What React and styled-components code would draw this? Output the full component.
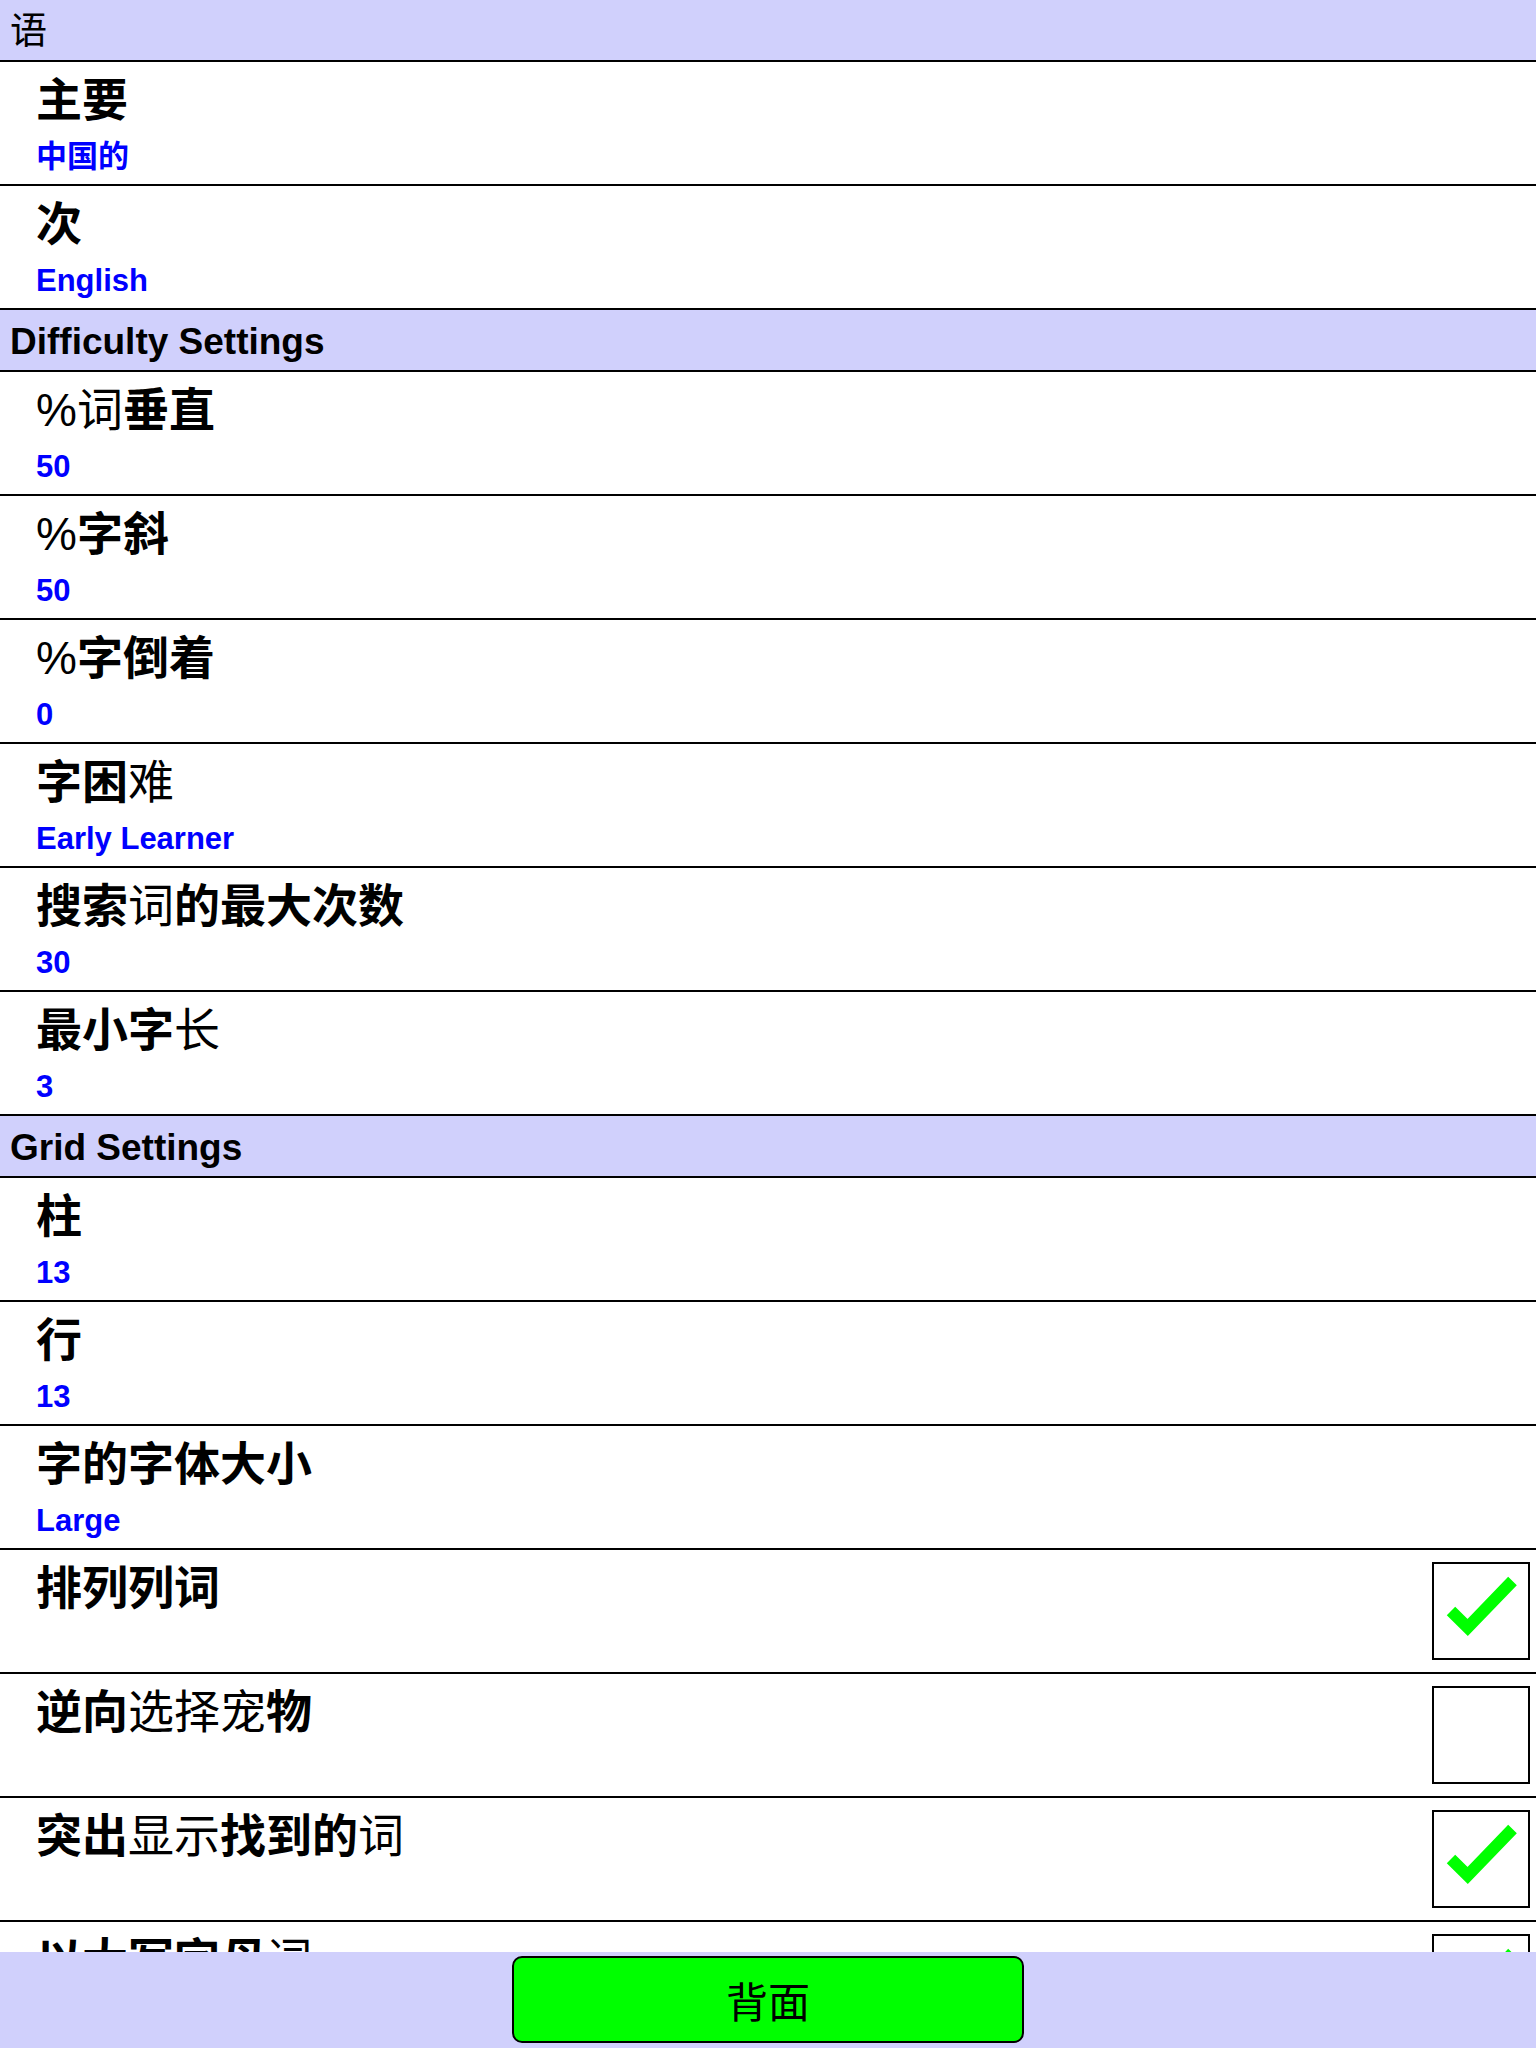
import React from "react";
import styled, { createGlobalStyle } from "styled-components";

const COLOR = {
  HEADER: "#d0d0fc",
  LINE: "#000000",
  VALUE: "#0000ff",
  CHECK: "#00ff00",
};

const FONT = `"Liberation Sans", "Noto Sans CJK SC", sans-serif`;

const SECTIONS = [
  {
    title: "语",
    light: "语",
    rows: [
      { label: "主要", value: "中国的" },
      { label: "次", value: "English" },
    ],
  },
  {
    title: "Difficulty Settings",
    rows: [
      { label: "%词垂直", light: "%词", value: "50" },
      { label: "%字斜", light: "%", value: "50" },
      { label: "%字倒着", light: "%", value: "0" },
      { label: "字困难", light: "难", value: "Early Learner" },
      { label: "搜索词的最大次数", light: "词", value: "30" },
      { label: "最小字长", light: "长", value: "3" },
    ],
  },
  {
    title: "Grid Settings",
    rows: [
      { label: "柱", value: "13" },
      { label: "行", value: "13" },
      { label: "字的字体大小", value: "Large" },
      { label: "排列列词", checked: true },
      { label: "逆向选择宠物", light: "选择宠", checked: false },
      { label: "突出显示找到的词", light: "显示词", checked: true },
      { label: "以大写字母词", light: "词", checked: true },
    ],
  },
];

const splitByWeight = (text, light = "") => {
  const parts = [];
  for (const ch of text) {
    const isLight = light.includes(ch);
    const last = parts[parts.length - 1];
    if (last && last.isLight === isLight) last.text += ch;
    else parts.push({ text: ch, isLight });
  }
  return parts;
};

const WeightedText = ({ text, light }) =>
  splitByWeight(text, light).map((part, i) =>
    part.isLight ? (
      <StyledLight key={i}>{part.text}</StyledLight>
    ) : (
      <React.Fragment key={i}>{part.text}</React.Fragment>
    )
  );

const CheckBox = ({ checked }) => (
  <StyledCheckBox>
    {checked && (
      <svg width="94" height="94" viewBox="2 2 94 94">
        <polyline
          points="19,49 35.7,65.5 80.5,19"
          fill="none"
          stroke={COLOR.CHECK}
          strokeWidth="12"
          strokeLinejoin="miter"
          strokeLinecap="butt"
        />
      </svg>
    )}
  </StyledCheckBox>
);

const SettingRow = ({ label, light, value, checked }) => (
  <StyledRow>
    <StyledRowText>
      <StyledLabel>
        <WeightedText text={label} light={light} />
      </StyledLabel>
      {value !== undefined && <StyledValue>{value}</StyledValue>}
    </StyledRowText>
    {checked !== undefined && <CheckBox checked={checked} />}
  </StyledRow>
);

export default function App() {
  return (
    <>
      <GlobalStyle />
      <StyledScreen>
        <StyledList>
          {SECTIONS.map((section) => (
            <section key={section.title}>
              <StyledSectionHeader>
                <WeightedText text={section.title} light={section.light} />
              </StyledSectionHeader>
              {section.rows.map((row) => (
                <SettingRow key={row.label} {...row} />
              ))}
            </section>
          ))}
        </StyledList>
        <StyledBottomBar>
          <StyledBackButton type="button">背面</StyledBackButton>
        </StyledBottomBar>
      </StyledScreen>
    </>
  );
}

const GlobalStyle = createGlobalStyle`
  html, body {
    margin: 0;
    padding: 0;
    background: #ffffff;
    font-family: ${FONT};
  }
`;

const StyledScreen = styled.div`
  display: flex;
  flex-direction: column;
  height: 100vh;
  overflow: hidden;
`;

const StyledList = styled.div`
  flex: 1;
  overflow: hidden;
  background: #ffffff;
`;

const StyledSectionHeader = styled.div`
  display: flex;
  align-items: center;
  box-sizing: border-box;
  height: 62px;
  padding: 4px 0 0 10px;
  background: ${COLOR.HEADER};
  border-bottom: 2px solid ${COLOR.LINE};
  color: #000000;
  font-family: ${FONT};
  font-size: 37px;
  font-weight: bold;
  line-height: 44px;
`;

const StyledLight = styled.span`
  font-weight: normal;
`;

const StyledRow = styled.div`
  display: flex;
  justify-content: space-between;
  align-items: flex-start;
  box-sizing: border-box;
  height: 124px;
  padding: 0 6px 0 36px;
  border-bottom: 2px solid ${COLOR.LINE};
  overflow: hidden;
`;

const StyledRowText = styled.div`
  display: flex;
  flex-direction: column;
  padding-top: 12px;
`;

const StyledLabel = styled.div`
  color: #000000;
  font-family: ${FONT};
  font-size: 46px;
  font-weight: bold;
  line-height: 52px;
  white-space: nowrap;
`;

const StyledValue = styled.div`
  margin-top: 13px;
  color: ${COLOR.VALUE};
  font-family: ${FONT};
  font-size: 31px;
  font-weight: bold;
  line-height: 36px;
  white-space: nowrap;
`;

const StyledCheckBox = styled.div`
  display: flex;
  width: 98px;
  height: 98px;
  margin-top: 12px;
  box-sizing: border-box;
  border: 2px solid ${COLOR.LINE};
  background: #ffffff;
  flex-shrink: 0;
`;

const StyledBottomBar = styled.div`
  display: flex;
  justify-content: center;
  height: 96px;
  padding: 4px 0 5px;
  box-sizing: border-box;
  background: ${COLOR.HEADER};
  flex-shrink: 0;
`;

const StyledBackButton = styled.button`
  width: 512px;
  height: 87px;
  padding: 0;
  border: 2px solid ${COLOR.LINE};
  border-radius: 10px;
  background: ${COLOR.CHECK};
  color: #000000;
  font-family: ${FONT};
  font-size: 42px;
  font-weight: normal;
`;
